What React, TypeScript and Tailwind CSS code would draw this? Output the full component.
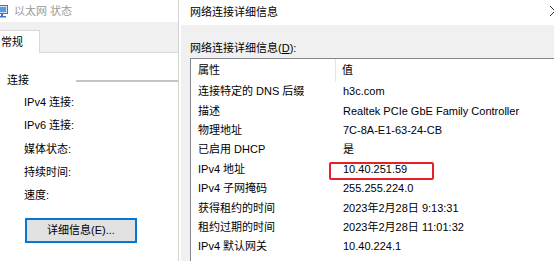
import React from 'react';

const rows: [string, string][] = [
  ['连接特定的 DNS 后缀', 'h3c.com'],
  ['描述', 'Realtek PCIe GbE Family Controller'],
  ['物理地址', '7C-8A-E1-63-24-CB'],
  ['已启用 DHCP', '是'],
  ['IPv4 地址', '10.40.251.59'],
  ['IPv4 子网掩码', '255.255.224.0'],
  ['获得租约的时间', '2023年2月28日 9:13:31'],
  ['租约过期的时间', '2023年2月28日 11:01:32'],
  ['IPv4 默认网关', '10.40.224.1'],
];

const connItems = ['IPv4 连接:', 'IPv6 连接:', '媒体状态:', '持续时间:', '速度:'];

function NetIcon() {
  return (
    <svg width="12" height="14" viewBox="0 0 12 14" className="shrink-0">
      <rect x="0.5" y="1.5" width="11" height="8" fill="#cfe3f5" stroke="#3b78c2" />
      <rect x="2" y="3" width="8" height="5" fill="#5a9be0" />
      <rect x="5" y="10" width="2" height="2" fill="#3b78c2" />
      <rect x="2" y="12" width="8" height="1.5" fill="#3b78c2" />
    </svg>
  );
}

function StatusWindow() {
  return (
    <div className="w-[179px] shrink-0 h-full flex flex-col bg-white border-r border-[#d4d4d4]">
      <div className="h-[22px] flex items-center gap-[6px] -ml-[4px]">
        <NetIcon />
        <span className="text-[#9a9a9a]">以太网 状态</span>
      </div>
      <div className="h-[31px] bg-[#f0f0f0] border-b border-[#d9d9d9] flex items-end">
        <div className="h-[23px] w-[40px] bg-white border-r border-t border-[#d9d9d9] -mb-px flex items-center pl-[1px]">
          常规
        </div>
      </div>
      <div className="flex items-center h-[27px] mt-[14px]">
        <span className="pl-[7px] w-[76px] shrink-0">连接</span>
        <div className="flex-1 h-[2px] bg-[#c4c4c4]" />
      </div>
      <div className="flex flex-col pl-[24px] -mt-[3px]">
        {connItems.map((t) => (
          <div key={t} className="h-[23.3px] flex items-center">
            {t}
          </div>
        ))}
      </div>
      <div className="pl-[25px] mt-[11px]">
        <button className="w-[112px] h-[25px] bg-[#e1e1e1] border-2 border-[#0078d7] flex items-center justify-center">
          详细信息(E)...
        </button>
      </div>
    </div>
  );
}

function DetailsWindow() {
  return (
    <div className="flex-1 h-full flex flex-col ml-[2px]">
      <div className="h-[25px] bg-white flex items-center pl-[9px] relative">
        <span>网络连接详细信息</span>
        <svg width="12" height="12" viewBox="0 0 12 12" className="absolute left-[368px] top-[5px]">
          <path d="M1 1 L11 11 M11 1 L1 11" stroke="#333" strokeWidth="1" fill="none" />
        </svg>
      </div>
      <div className="flex-1 bg-[#f0f0f0] pl-[9px] flex flex-col">
        <div className="h-[33px] flex items-end pb-[4px]">
          网络连接详细信息(<span className="underline">D</span>):
        </div>
        <div className="flex-1 bg-white border-t border-l border-[#828790] flex flex-col">
          <div className="h-[23px] flex items-center shrink-0">
            <div className="w-[145px] pl-[7px] h-full flex items-center border-r border-[#e5e5e5]">属性</div>
            <div className="pl-[6px]">值</div>
          </div>
          {rows.map(([k, v]) => (
            <div key={k} className="h-[19.4px] flex items-center shrink-0">
              <div className="w-[145px] pl-[7px] whitespace-nowrap">{k}</div>
              <div className="pl-[7px] whitespace-nowrap relative">
                {v}
                {k === 'IPv4 地址' && (
                  <div className="absolute left-[-7px] top-[-2px] w-[105px] h-[18px] border-2 border-[#e8202a] rounded-[2px]" />
                )}
              </div>
            </div>
          ))}
        </div>
      </div>
    </div>
  );
}

export default function App() {
  return (
    <div
      className="w-[554px] h-[261px] overflow-hidden flex bg-white text-[11px] text-black leading-none"
      style={{ fontFamily: '"Liberation Sans", "Noto Sans CJK SC", sans-serif' }}
    >
      <StatusWindow />
      <DetailsWindow />
    </div>
  );
}
